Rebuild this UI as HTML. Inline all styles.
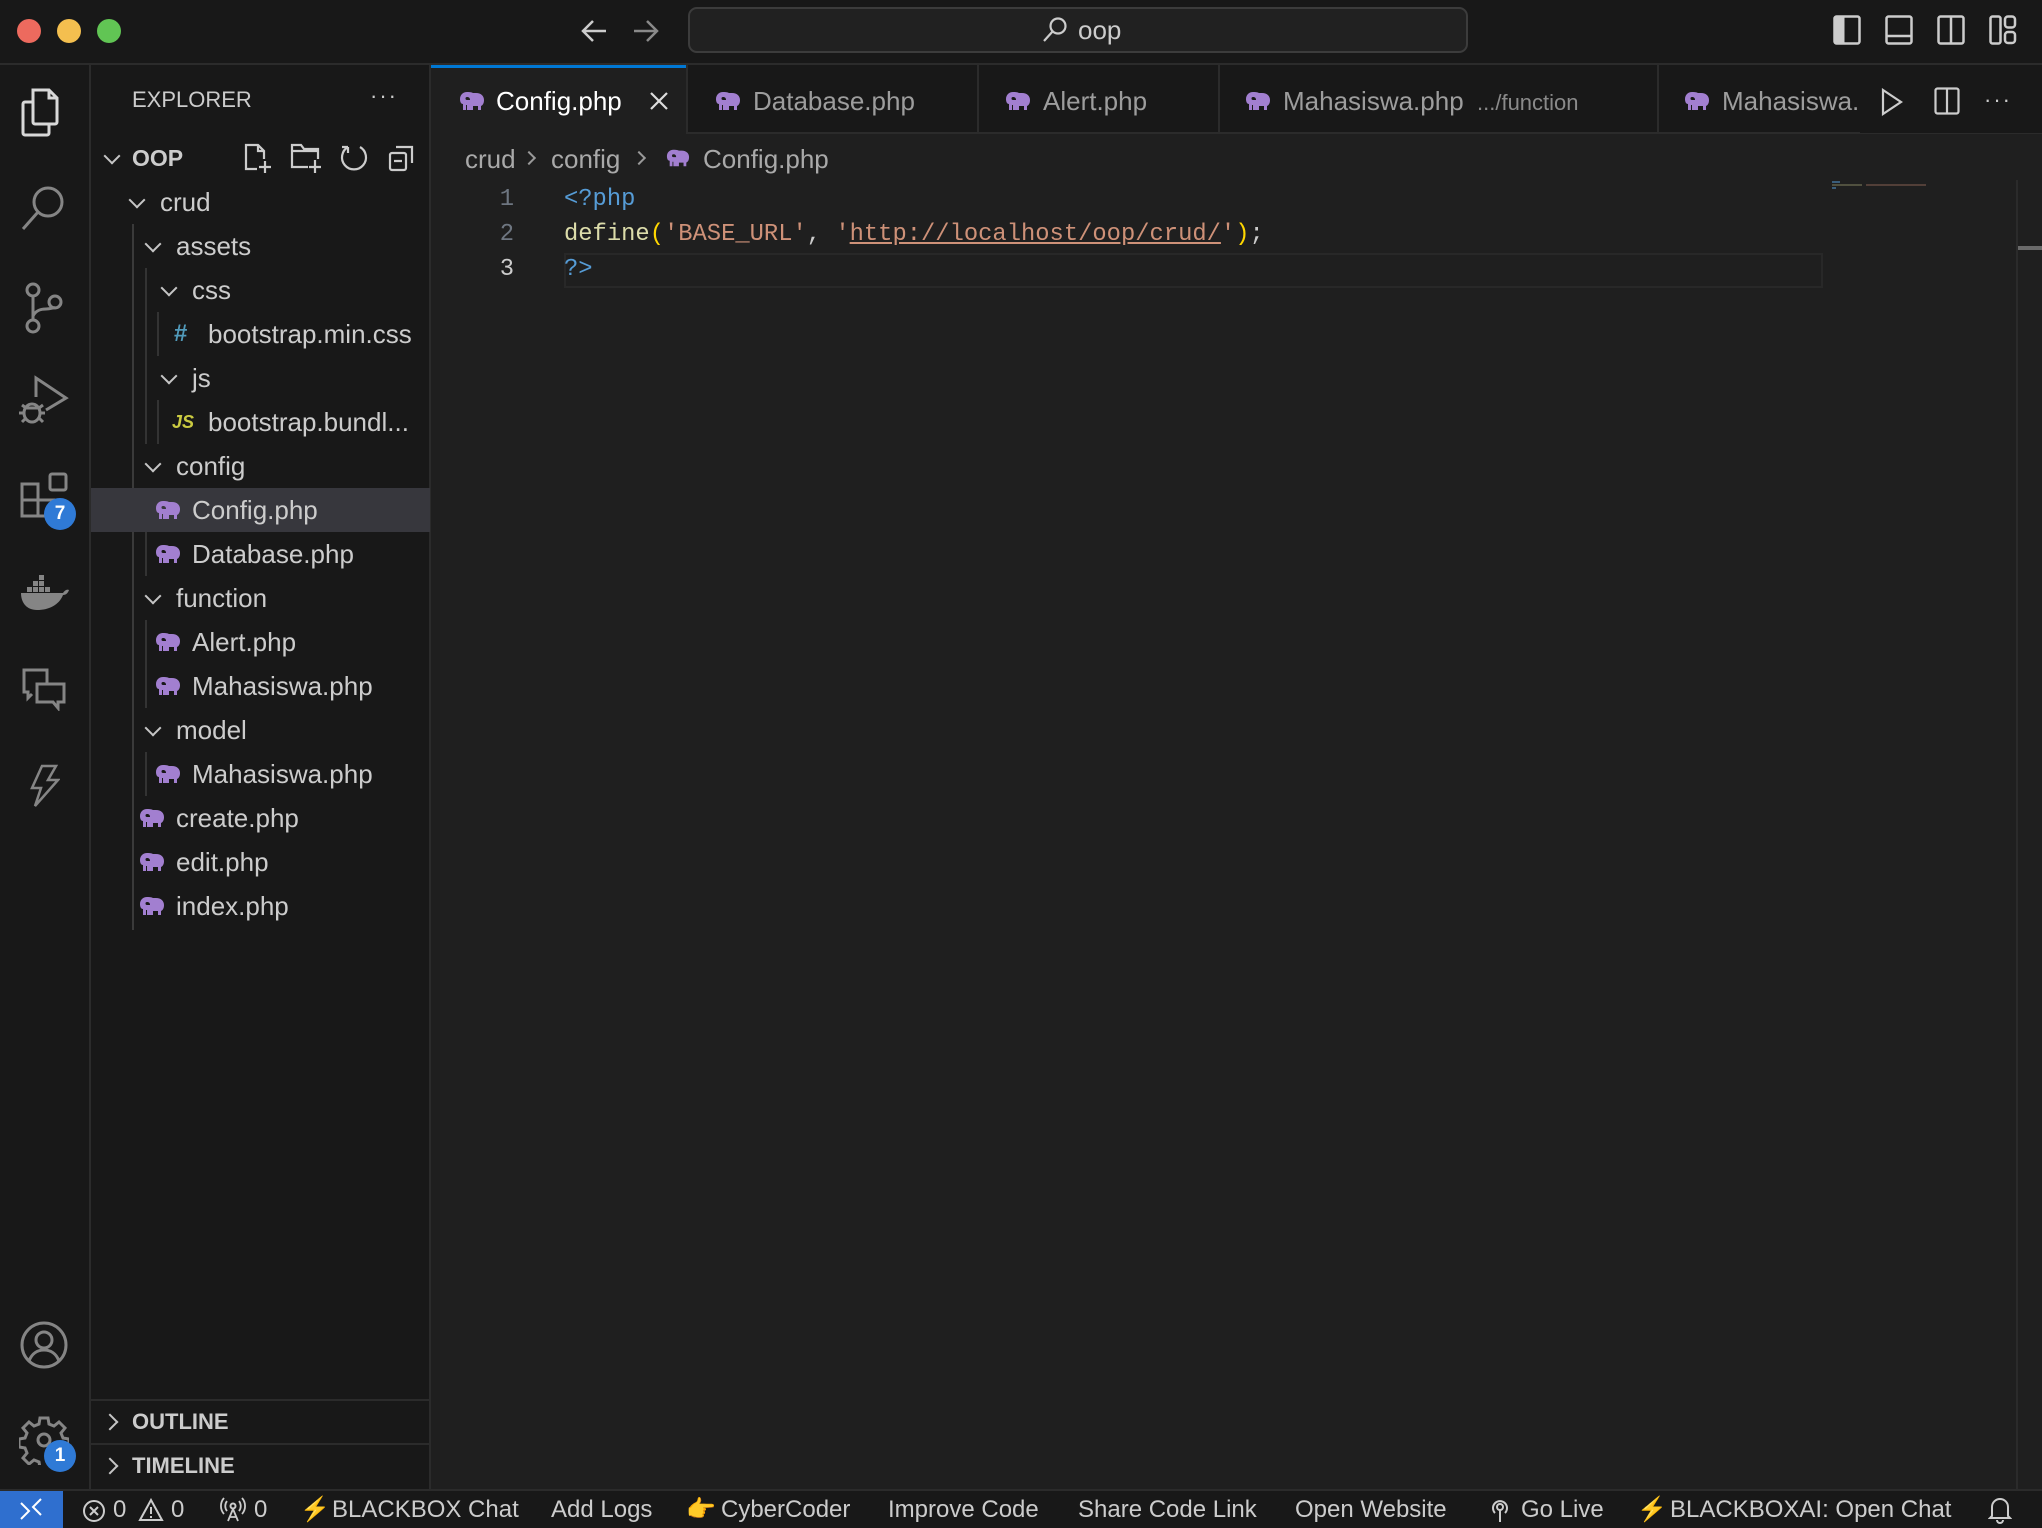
<!DOCTYPE html>
<html><head><meta charset="utf-8"><style>
*{margin:0;padding:0;box-sizing:border-box}
body{width:2042px;height:1528px;background:#1f1f1f;position:relative;overflow:hidden;font-family:"Liberation Sans",sans-serif;color:#ccc}
.a{position:absolute}
.t{position:absolute;white-space:nowrap;font-size:26px;line-height:44px;color:#cccccc}
.chev{position:absolute;width:12px;height:12px;border-right:2px solid #c5c5c5;border-bottom:2px solid #c5c5c5;transform:rotate(45deg)}
.chr{position:absolute;width:12px;height:12px;border-right:2px solid #c5c5c5;border-bottom:2px solid #c5c5c5;transform:rotate(-45deg)}
.ele{position:absolute;width:26px;height:20px}
.code{position:absolute;font-family:"Liberation Mono",monospace;font-size:23.8px;line-height:35px;white-space:pre}
.st{position:absolute;top:1491px;line-height:37px;font-size:24px;color:#cccccc;white-space:nowrap}
svg.i{stroke:#858585;fill:none;stroke-width:3}
</style></head><body>
<!-- title bar -->
<div class="a" style="left:0;top:0;width:2042px;height:65px;background:#181818;border-bottom:2px solid #2b2b2b"></div>
<div class="a" style="left:17px;top:19px;width:24px;height:24px;border-radius:50%;background:#ed6a5e"></div>
<div class="a" style="left:57px;top:19px;width:24px;height:24px;border-radius:50%;background:#f4bf4f"></div>
<div class="a" style="left:97px;top:19px;width:24px;height:24px;border-radius:50%;background:#61c554"></div>
<svg class="a" style="left:580px;top:18px" width="28" height="26" viewBox="0 0 28 26"><path d="M26 13H3M13 3L3 13l10 10" stroke="#cccccc" stroke-width="2.5" fill="none"/></svg>
<svg class="a" style="left:632px;top:18px" width="28" height="26" viewBox="0 0 28 26"><path d="M2 13h23M15 3l10 10-10 10" stroke="#8a8a8a" stroke-width="2.5" fill="none"/></svg>
<div class="a" style="left:688px;top:7px;width:780px;height:46px;border:2px solid #3c3c3c;border-radius:9px;background:#212121"></div>
<svg class="a" style="left:1041px;top:16px" width="28" height="28" viewBox="0 0 28 28"><circle cx="17" cy="10" r="7.5" stroke="#cccccc" stroke-width="2.2" fill="none"/><path d="M12 15L3 25" stroke="#cccccc" stroke-width="2.2"/></svg>
<div class="t" style="left:1078px;top:8px;line-height:44px;font-size:26px">oop</div>
<svg class="a" style="left:1833px;top:15px" width="28" height="30" viewBox="0 0 28 30"><rect x="1.5" y="1.5" width="25" height="27" stroke="#ccc" stroke-width="2.5" fill="none" rx="2"/><rect x="1.5" y="1.5" width="10" height="27" fill="#ccc"/></svg>
<svg class="a" style="left:1885px;top:15px" width="28" height="30" viewBox="0 0 28 30"><rect x="1.5" y="1.5" width="25" height="27" stroke="#ccc" stroke-width="2.5" fill="none" rx="2"/><path d="M1.5 21h25" stroke="#ccc" stroke-width="2.5"/></svg>
<svg class="a" style="left:1937px;top:15px" width="28" height="30" viewBox="0 0 28 30"><rect x="1.5" y="1.5" width="25" height="27" stroke="#ccc" stroke-width="2.5" fill="none" rx="2"/><path d="M14 1.5v27" stroke="#ccc" stroke-width="2.5"/></svg>
<svg class="a" style="left:1989px;top:15px" width="28" height="30" viewBox="0 0 28 30"><rect x="1.5" y="1.5" width="10" height="27" stroke="#ccc" stroke-width="2.5" fill="none" rx="2"/><rect x="16" y="1.5" width="10" height="11" stroke="#ccc" stroke-width="2.5" fill="none" rx="3"/><rect x="16" y="17" width="10" height="11" stroke="#ccc" stroke-width="2.5" fill="none" rx="3"/></svg>

<!-- activity bar -->
<div class="a" style="left:0;top:65px;width:91px;height:1426px;background:#181818;border-right:2px solid #2b2b2b"></div>
<svg class="a" style="left:20px;top:88px" width="46" height="50" viewBox="0 0 46 50"><path d="M13 2h16l8 8v24a2 2 0 0 1-2 2H15a2 2 0 0 1-2-2z M29 2v8h8" stroke="#d8d8d8" stroke-width="3" fill="none"/><path d="M13 14H5a2 2 0 0 0-2 2v29a2 2 0 0 0 2 2h22a2 2 0 0 0 2-2v-9" stroke="#d8d8d8" stroke-width="3" fill="none"/></svg>
<svg class="a i" style="left:20px;top:184px" width="48" height="50" viewBox="0 0 48 50"><circle cx="28" cy="18" r="14"/><path d="M18 28L3 45"/></svg>
<svg class="a i" style="left:24px;top:282px" width="40" height="52" viewBox="0 0 40 52"><circle cx="9" cy="8" r="6"/><circle cx="9" cy="44" r="6"/><circle cx="31" cy="20" r="6"/><path d="M9 14v24M9 34c3-6 8-7 13-7s9-2 9-1"/></svg>
<svg class="a i" style="left:18px;top:375px" width="52" height="52" viewBox="0 0 52 52"><path d="M18 22V3l30 20-20 12"/><ellipse cx="14" cy="38" rx="8" ry="9"/><path d="M6 38H1M27 38h-6M4 30l4 3M4 47l4-4M25 30l-4 3M25 47l-4-4M8 33h13"/></svg>
<svg class="a i" style="left:20px;top:472px" width="50" height="50" viewBox="0 0 50 50"><rect x="2" y="12" width="16" height="16"/><rect x="2" y="28" width="16" height="16"/><rect x="18" y="28" width="16" height="16"/><rect x="30" y="2" width="16" height="16" rx="2"/></svg>
<div class="a" style="left:44px;top:498px;width:32px;height:32px;border-radius:50%;background:#2f7ad6;color:#fff;font-weight:bold;font-size:19px;text-align:center;line-height:32px">7</div>
<svg class="a" style="left:19px;top:575px" width="50" height="38" viewBox="0 0 50 38"><path d="M2 18h42c2-3 4-4 6-3-1 3-3 5-6 5-4 10-14 15-26 15C8 35 2 28 2 18z" fill="#858585"/><rect x="8" y="12" width="5" height="5" fill="#858585"/><rect x="14" y="12" width="5" height="5" fill="#858585"/><rect x="20" y="12" width="5" height="5" fill="#858585"/><rect x="26" y="12" width="5" height="5" fill="#858585"/><rect x="14" y="6" width="5" height="5" fill="#858585"/><rect x="20" y="6" width="5" height="5" fill="#858585"/><rect x="20" y="0" width="5" height="5" fill="#858585"/></svg>
<svg class="a i" style="left:21px;top:667px" width="46" height="44" viewBox="0 0 46 44"><path d="M26 16V3H3v22h4v6l4-4"/><path d="M16 17h27v18h-6v6l-5-6H16z"/></svg>
<svg class="a i" style="left:30px;top:764px" width="30" height="44" viewBox="0 0 30 44"><path d="M12 2h14l-8 14h10L5 42l6-18H2z" stroke-width="2.5"/></svg>
<svg class="a i" style="left:19px;top:1320px" width="50" height="50" viewBox="0 0 50 50"><circle cx="25" cy="25" r="22"/><circle cx="25" cy="20" r="8"/><path d="M10 41c3-8 9-11 15-11s12 3 15 11"/></svg>
<svg class="a i" style="left:19px;top:1415px" width="50" height="50" viewBox="0 0 50 50"><path d="M21 3h8l1 6 5 2 5-4 6 6-4 5 2 5 6 1v8l-6 1-2 5 4 5-6 6-5-4-5 2-1 6h-8l-1-6-5-2-5 4-6-6 4-5-2-5-6-1v-8l6-1 2-5-4-5 6-6 5 4 5-2z"/><circle cx="25" cy="25" r="6"/></svg>
<div class="a" style="left:44px;top:1440px;width:32px;height:32px;border-radius:50%;background:#2f7ad6;color:#fff;font-weight:bold;font-size:19px;text-align:center;line-height:32px">1</div>

<!-- sidebar -->
<div class="a" style="left:91px;top:65px;width:340px;height:1426px;background:#181818;border-right:2px solid #2b2b2b"></div>
<div class="t" style="left:132px;top:78px;font-size:22px">EXPLORER</div>
<div class="t" style="left:370px;top:74px;font-size:22px;letter-spacing:2px">···</div>
<div class="chev" style="left:106px;top:150px"></div>
<div class="t" style="left:132px;top:136px;font-size:23px;font-weight:bold">OOP</div>
<svg class="a" style="left:243px;top:143px" width="30" height="32" viewBox="0 0 30 32"><path d="M14 26H3V2h12l6 6v8M15 2v6h6M22 18v12M16 24h12" stroke="#ccc" stroke-width="2.2" fill="none"/></svg>
<svg class="a" style="left:290px;top:143px" width="34" height="32" viewBox="0 0 34 32"><path d="M18 24H2V2h9l3 4h14v10M2 8h26M25 17v13M19 24h12" stroke="#ccc" stroke-width="2.2" fill="none"/></svg>
<svg class="a" style="left:340px;top:143px" width="28" height="30" viewBox="0 0 28 30"><path d="M8 4A12 12 0 1 0 20 4M8 4v6M8 4H2" stroke="#ccc" stroke-width="2.2" fill="none"/></svg>
<svg class="a" style="left:388px;top:143px" width="28" height="30" viewBox="0 0 28 30"><rect x="2" y="10" width="16" height="17" rx="2" stroke="#ccc" stroke-width="2.2" fill="none"/><path d="M8 4h16v16M6 18h8" stroke="#ccc" stroke-width="2.2" fill="none"/></svg>

<div class="a" style="left:132px;top:224px;width:2px;height:706px;background:#3a3a3a"></div>
<div class="a" style="left:145px;top:268px;width:2px;height:176px;background:#333"></div>
<div class="a" style="left:145px;top:488px;width:2px;height:88px;background:#333"></div>
<div class="a" style="left:145px;top:620px;width:2px;height:88px;background:#333"></div>
<div class="a" style="left:145px;top:752px;width:2px;height:44px;background:#333"></div>
<div class="a" style="left:157px;top:312px;width:2px;height:44px;background:#333"></div>
<div class="a" style="left:157px;top:400px;width:2px;height:44px;background:#333"></div>
<div class="a" style="left:91px;top:488px;width:339px;height:44px;background:#37373d"></div>

<div class="chev" style="left:131px;top:194px"></div><div class="t" style="left:160px;top:180px">crud</div>
<div class="chev" style="left:147px;top:238px"></div><div class="t" style="left:176px;top:224px">assets</div>
<div class="chev" style="left:163px;top:282px"></div><div class="t" style="left:192px;top:268px">css</div>
<div class="t" style="left:174px;top:312px;color:#519aba;font-weight:bold;font-size:24px">#</div><div class="t" style="left:208px;top:312px">bootstrap.min.css</div>
<div class="chev" style="left:163px;top:370px"></div><div class="t" style="left:192px;top:356px">js</div>
<div class="t" style="left:172px;top:400px;color:#cbcb41;font-weight:bold;font-size:18px;font-style:italic">JS</div><div class="t" style="left:208px;top:400px">bootstrap.bundl...</div>
<div class="chev" style="left:147px;top:458px"></div><div class="t" style="left:176px;top:444px">config</div>
<div class="t" style="left:192px;top:488px">Config.php</div>
<div class="t" style="left:192px;top:532px">Database.php</div>
<div class="chev" style="left:147px;top:590px"></div><div class="t" style="left:176px;top:576px">function</div>
<div class="t" style="left:192px;top:620px">Alert.php</div>
<div class="t" style="left:192px;top:664px">Mahasiswa.php</div>
<div class="chev" style="left:147px;top:722px"></div><div class="t" style="left:176px;top:708px">model</div>
<div class="t" style="left:192px;top:752px">Mahasiswa.php</div>
<div class="t" style="left:176px;top:796px">create.php</div>
<div class="t" style="left:176px;top:840px">edit.php</div>
<div class="t" style="left:176px;top:884px">index.php</div>

<svg class="ele" style="left:155px;top:500px" viewBox="0 0 26 20"><path fill="#a27fd0" d="M8 1C4 1 1 4 1 8c0 3 1 5 3 5v6h3v-5h1v5h3V9H8a1.5 1.5 0 0 1 0-3c2 0 3 1 3 3v10h3v-4h5v4h3v-4c2-1 3-3 3-6 0-4-3-7-8-7h-3c-2-1-4-1-7-1z"/></svg>
<svg class="ele" style="left:155px;top:544px" viewBox="0 0 26 20"><path fill="#a27fd0" d="M8 1C4 1 1 4 1 8c0 3 1 5 3 5v6h3v-5h1v5h3V9H8a1.5 1.5 0 0 1 0-3c2 0 3 1 3 3v10h3v-4h5v4h3v-4c2-1 3-3 3-6 0-4-3-7-8-7h-3c-2-1-4-1-7-1z"/></svg>
<svg class="ele" style="left:155px;top:632px" viewBox="0 0 26 20"><path fill="#a27fd0" d="M8 1C4 1 1 4 1 8c0 3 1 5 3 5v6h3v-5h1v5h3V9H8a1.5 1.5 0 0 1 0-3c2 0 3 1 3 3v10h3v-4h5v4h3v-4c2-1 3-3 3-6 0-4-3-7-8-7h-3c-2-1-4-1-7-1z"/></svg>
<svg class="ele" style="left:155px;top:676px" viewBox="0 0 26 20"><path fill="#a27fd0" d="M8 1C4 1 1 4 1 8c0 3 1 5 3 5v6h3v-5h1v5h3V9H8a1.5 1.5 0 0 1 0-3c2 0 3 1 3 3v10h3v-4h5v4h3v-4c2-1 3-3 3-6 0-4-3-7-8-7h-3c-2-1-4-1-7-1z"/></svg>
<svg class="ele" style="left:155px;top:764px" viewBox="0 0 26 20"><path fill="#a27fd0" d="M8 1C4 1 1 4 1 8c0 3 1 5 3 5v6h3v-5h1v5h3V9H8a1.5 1.5 0 0 1 0-3c2 0 3 1 3 3v10h3v-4h5v4h3v-4c2-1 3-3 3-6 0-4-3-7-8-7h-3c-2-1-4-1-7-1z"/></svg>
<svg class="ele" style="left:139px;top:808px" viewBox="0 0 26 20"><path fill="#a27fd0" d="M8 1C4 1 1 4 1 8c0 3 1 5 3 5v6h3v-5h1v5h3V9H8a1.5 1.5 0 0 1 0-3c2 0 3 1 3 3v10h3v-4h5v4h3v-4c2-1 3-3 3-6 0-4-3-7-8-7h-3c-2-1-4-1-7-1z"/></svg>
<svg class="ele" style="left:139px;top:852px" viewBox="0 0 26 20"><path fill="#a27fd0" d="M8 1C4 1 1 4 1 8c0 3 1 5 3 5v6h3v-5h1v5h3V9H8a1.5 1.5 0 0 1 0-3c2 0 3 1 3 3v10h3v-4h5v4h3v-4c2-1 3-3 3-6 0-4-3-7-8-7h-3c-2-1-4-1-7-1z"/></svg>
<svg class="ele" style="left:139px;top:896px" viewBox="0 0 26 20"><path fill="#a27fd0" d="M8 1C4 1 1 4 1 8c0 3 1 5 3 5v6h3v-5h1v5h3V9H8a1.5 1.5 0 0 1 0-3c2 0 3 1 3 3v10h3v-4h5v4h3v-4c2-1 3-3 3-6 0-4-3-7-8-7h-3c-2-1-4-1-7-1z"/></svg>

<div class="a" style="left:91px;top:1399px;width:339px;height:2px;background:#2b2b2b"></div>
<div class="a" style="left:91px;top:1443px;width:339px;height:2px;background:#2b2b2b"></div>
<div class="chr" style="left:104px;top:1416px"></div><div class="t" style="left:132px;top:1400px;font-size:22px;font-weight:bold">OUTLINE</div>
<div class="chr" style="left:104px;top:1460px"></div><div class="t" style="left:132px;top:1444px;font-size:22px;font-weight:bold">TIMELINE</div>

<!-- tabs -->
<div class="a" style="left:431px;top:65px;width:1611px;height:69px;background:#181818;border-bottom:2px solid #2b2b2b"></div>
<div class="a" style="left:431px;top:65px;width:255px;height:70px;background:#1f1f1f;border-top:3px solid #0078d4"></div>
<div class="a" style="left:977px;top:65px;width:2px;height:69px;background:#2b2b2b"></div>
<div class="a" style="left:1218px;top:65px;width:2px;height:69px;background:#2b2b2b"></div>
<div class="a" style="left:1657px;top:65px;width:2px;height:69px;background:#2b2b2b"></div>
<div class="a" style="left:686px;top:65px;width:2px;height:69px;background:#2b2b2b"></div>
<svg class="ele" style="left:459px;top:91px" viewBox="0 0 26 20"><path fill="#a27fd0" d="M8 1C4 1 1 4 1 8c0 3 1 5 3 5v6h3v-5h1v5h3V9H8a1.5 1.5 0 0 1 0-3c2 0 3 1 3 3v10h3v-4h5v4h3v-4c2-1 3-3 3-6 0-4-3-7-8-7h-3c-2-1-4-1-7-1z"/></svg>
<div class="t" style="left:496px;top:79px;color:#fff">Config.php</div>
<svg class="a" style="left:649px;top:91px" width="20" height="20" viewBox="0 0 20 20"><path d="M2 2l16 16M18 2L2 18" stroke="#ddd" stroke-width="2.2"/></svg>
<svg class="ele" style="left:715px;top:91px" viewBox="0 0 26 20"><path fill="#a27fd0" d="M8 1C4 1 1 4 1 8c0 3 1 5 3 5v6h3v-5h1v5h3V9H8a1.5 1.5 0 0 1 0-3c2 0 3 1 3 3v10h3v-4h5v4h3v-4c2-1 3-3 3-6 0-4-3-7-8-7h-3c-2-1-4-1-7-1z"/></svg>
<div class="t" style="left:753px;top:79px;color:#9d9d9d">Database.php</div>
<svg class="ele" style="left:1005px;top:91px" viewBox="0 0 26 20"><path fill="#a27fd0" d="M8 1C4 1 1 4 1 8c0 3 1 5 3 5v6h3v-5h1v5h3V9H8a1.5 1.5 0 0 1 0-3c2 0 3 1 3 3v10h3v-4h5v4h3v-4c2-1 3-3 3-6 0-4-3-7-8-7h-3c-2-1-4-1-7-1z"/></svg>
<div class="t" style="left:1043px;top:79px;color:#9d9d9d">Alert.php</div>
<svg class="ele" style="left:1245px;top:91px" viewBox="0 0 26 20"><path fill="#a27fd0" d="M8 1C4 1 1 4 1 8c0 3 1 5 3 5v6h3v-5h1v5h3V9H8a1.5 1.5 0 0 1 0-3c2 0 3 1 3 3v10h3v-4h5v4h3v-4c2-1 3-3 3-6 0-4-3-7-8-7h-3c-2-1-4-1-7-1z"/></svg>
<div class="t" style="left:1283px;top:79px;color:#9d9d9d">Mahasiswa.php <span style="font-size:22px;color:#8a8a8a">&nbsp;.../function</span></div>
<svg class="ele" style="left:1684px;top:91px" viewBox="0 0 26 20"><path fill="#a27fd0" d="M8 1C4 1 1 4 1 8c0 3 1 5 3 5v6h3v-5h1v5h3V9H8a1.5 1.5 0 0 1 0-3c2 0 3 1 3 3v10h3v-4h5v4h3v-4c2-1 3-3 3-6 0-4-3-7-8-7h-3c-2-1-4-1-7-1z"/></svg>
<div class="a" style="left:1720px;top:65px;width:140px;height:68px;overflow:hidden"><div class="t" style="left:2px;top:14px;color:#9d9d9d">Mahasiswa.php</div></div>
<div class="a" style="left:1860px;top:65px;width:182px;height:68px;background:#181818"></div>
<svg class="a" style="left:1880px;top:88px" width="24" height="28" viewBox="0 0 24 28"><path d="M3 2l18 12L3 26z" stroke="#ccc" stroke-width="2.2" fill="none"/></svg>
<svg class="a" style="left:1934px;top:87px" width="26" height="28" viewBox="0 0 26 28"><rect x="1.5" y="1.5" width="23" height="25" stroke="#ccc" stroke-width="2.2" fill="none" rx="2"/><path d="M13 1.5v25" stroke="#ccc" stroke-width="2.2"/></svg>
<div class="t" style="left:1984px;top:78px;font-size:22px;letter-spacing:2px">···</div>

<!-- breadcrumbs -->
<div class="t" style="left:465px;top:137px;color:#a9a9a9">crud</div>
<div class="chr" style="left:524px;top:153px;width:10px;height:10px;border-color:#999"></div>
<div class="t" style="left:551px;top:137px;color:#a9a9a9">config</div>
<div class="chr" style="left:634px;top:153px;width:10px;height:10px;border-color:#999"></div>
<svg class="ele" style="left:666px;top:148px;width:24px" viewBox="0 0 26 20"><path fill="#a27fd0" d="M8 1C4 1 1 4 1 8c0 3 1 5 3 5v6h3v-5h1v5h3V9H8a1.5 1.5 0 0 1 0-3c2 0 3 1 3 3v10h3v-4h5v4h3v-4c2-1 3-3 3-6 0-4-3-7-8-7h-3c-2-1-4-1-7-1z"/></svg>
<div class="t" style="left:703px;top:137px;color:#a9a9a9">Config.php</div>

<!-- code -->
<div class="a" style="left:564px;top:253px;width:1259px;height:35px;border:2px solid #282828"></div>
<div class="code" style="left:480px;top:182px;width:34px;text-align:right;color:#6e7681">1</div>
<div class="code" style="left:480px;top:217px;width:34px;text-align:right;color:#6e7681">2</div>
<div class="code" style="left:480px;top:252px;width:34px;text-align:right;color:#cccccc">3</div>
<div class="code" style="left:564px;top:182px;color:#569cd6">&lt;?php</div>
<div class="code" style="left:564px;top:217px;color:#cccccc"><span style="color:#dcdcaa">define</span><span style="color:#ffd700">(</span><span style="color:#ce9178">'BASE_URL'</span>, <span style="color:#ce9178">'<span style="text-decoration:underline">http://localhost/oop/crud/</span>'</span><span style="color:#ffd700">)</span>;</div>
<div class="code" style="left:564px;top:252px;color:#569cd6">?&gt;</div>

<!-- minimap / scrollbar -->
<div class="a" style="left:1832px;top:181px;width:8px;height:2px;background:#569cd6;opacity:.5"></div>
<div class="a" style="left:1832px;top:184px;width:30px;height:2px;background:#9a9a70;opacity:.4"></div>
<div class="a" style="left:1866px;top:184px;width:60px;height:2px;background:#a07060;opacity:.4"></div>
<div class="a" style="left:1832px;top:187px;width:4px;height:2px;background:#569cd6;opacity:.5"></div>
<div class="a" style="left:2016px;top:180px;width:2px;height:1310px;background:#2b2b2b"></div>
<div class="a" style="left:2018px;top:246px;width:24px;height:4px;background:#6a6a6a"></div>

<!-- status bar -->
<div class="a" style="left:0;top:1489px;width:2042px;height:39px;background:#181818;border-top:2px solid #2b2b2b"></div>
<div class="a" style="left:0;top:1491px;width:63px;height:37px;background:#2f6fcf"></div>
<svg class="a" style="left:18px;top:1497px" width="26" height="24" viewBox="0 0 26 24"><path d="M3 22l8-8-8-8M23 2l-8 8 8 8" stroke="#fff" stroke-width="2" fill="none"/></svg>
<svg class="a" style="left:82px;top:1499px" width="24" height="24" viewBox="0 0 24 24"><circle cx="12" cy="12" r="10" stroke="#ccc" stroke-width="2" fill="none"/><path d="M8 8l8 8M16 8l-8 8" stroke="#ccc" stroke-width="2"/></svg>
<div class="st" style="left:113px">0</div>
<svg class="a" style="left:138px;top:1498px" width="26" height="24" viewBox="0 0 26 24"><path d="M13 2L2 22h22z M13 9v7M13 18v2" stroke="#ccc" stroke-width="2" fill="none"/></svg>
<div class="st" style="left:171px">0</div>
<svg class="a" style="left:220px;top:1497px" width="26" height="26" viewBox="0 0 26 26"><circle cx="13" cy="9" r="2.5" stroke="#ccc" stroke-width="2" fill="none"/><path d="M13 12l-5 12M13 12l5 12M9 20h8M7 4a8 8 0 0 0 0 10M19 4a8 8 0 0 1 0 10M4 1a12 12 0 0 0 0 16M22 1a12 12 0 0 1 0 16" stroke="#ccc" stroke-width="1.8" fill="none"/></svg>
<div class="st" style="left:254px">0</div>
<div class="st" style="left:300px;color:#f5b82e">⚡</div>
<div class="st" style="left:332px">BLACKBOX Chat</div>
<div class="st" style="left:551px">Add Logs</div>
<div class="st" style="left:686px;color:#f2c94c">👉</div>
<div class="st" style="left:721px">CyberCoder</div>
<div class="st" style="left:888px">Improve Code</div>
<div class="st" style="left:1078px">Share Code Link</div>
<div class="st" style="left:1295px">Open Website</div>
<svg class="a" style="left:1489px;top:1497px" width="22" height="26" viewBox="0 0 22 26"><circle cx="11" cy="10" r="3" stroke="#ccc" stroke-width="2" fill="none"/><path d="M11 13v12M6 16a7 7 0 1 1 10 0" stroke="#ccc" stroke-width="2" fill="none"/></svg>
<div class="st" style="left:1521px">Go Live</div>
<div class="st" style="left:1637px;color:#f5b82e">⚡</div>
<div class="st" style="left:1670px">BLACKBOXAI: Open Chat</div>
<svg class="a" style="left:1988px;top:1496px" width="24" height="28" viewBox="0 0 24 28"><path d="M4 20V11a8 8 0 0 1 16 0v9l2 2H2z M9 24a3 3 0 0 0 6 0" stroke="#ccc" stroke-width="2" fill="none"/></svg>
</body></html>
